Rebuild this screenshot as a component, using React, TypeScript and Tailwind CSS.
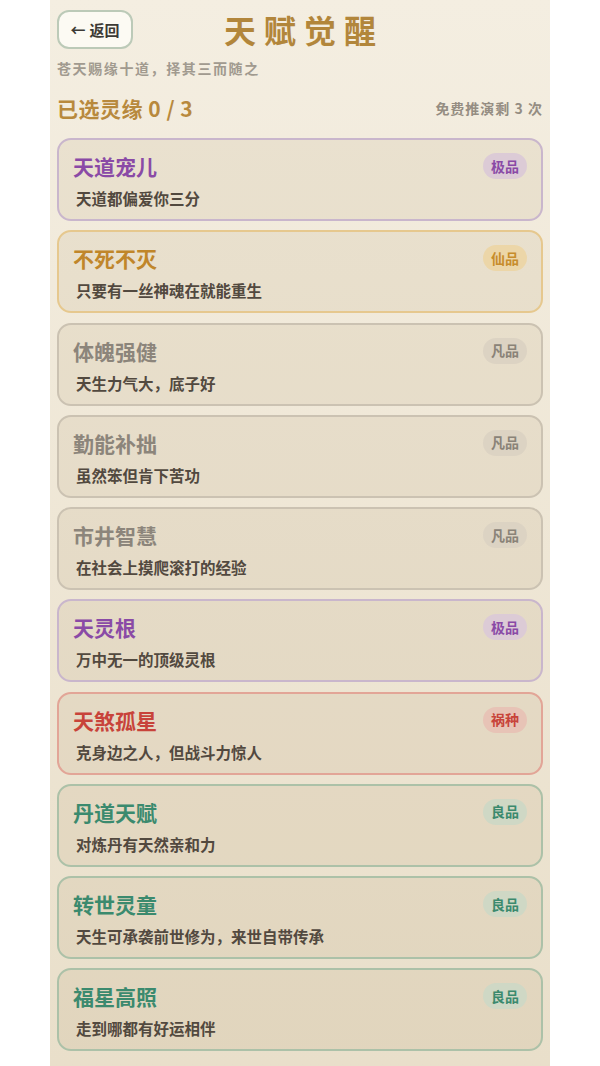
type Tier = 'ji' | 'xian' | 'fan' | 'huo' | 'liang';

type Talent = {
  name: string;
  desc: string;
  tier: Tier;
};

const tierStyle: Record<Tier, { label: string; card: string; title: string; badge: string }> = {
  ji: {
    label: '极品',
    card: 'border-[#c9b6cc]',
    title: 'text-[#8a4aa6]',
    badge: 'bg-[#dccbd6] text-[#8a4aa6]',
  },
  xian: {
    label: '仙品',
    card: 'border-[#e6c88e]',
    title: 'text-[#c0862a]',
    badge: 'bg-[#ecd6a8] text-[#c78d2c]',
  },
  fan: {
    label: '凡品',
    card: 'border-[#cbc2b2]',
    title: 'text-[#8c857b]',
    badge: 'bg-[#dcd3c3] text-[#8a8378]',
  },
  huo: {
    label: '祸种',
    card: 'border-[#e2a597]',
    title: 'text-[#c8433a]',
    badge: 'bg-[#e7c3b6] text-[#c8433a]',
  },
  liang: {
    label: '良品',
    card: 'border-[#acc1a8]',
    title: 'text-[#3b8a6e]',
    badge: 'bg-[#cfd8c5] text-[#3b8a6e]',
  },
};

const talents: Talent[] = [
  { name: '天道宠儿', desc: '天道都偏爱你三分', tier: 'ji' },
  { name: '不死不灭', desc: '只要有一丝神魂在就能重生', tier: 'xian' },
  { name: '体魄强健', desc: '天生力气大，底子好', tier: 'fan' },
  { name: '勤能补拙', desc: '虽然笨但肯下苦功', tier: 'fan' },
  { name: '市井智慧', desc: '在社会上摸爬滚打的经验', tier: 'fan' },
  { name: '天灵根', desc: '万中无一的顶级灵根', tier: 'ji' },
  { name: '天煞孤星', desc: '克身边之人，但战斗力惊人', tier: 'huo' },
  { name: '丹道天赋', desc: '对炼丹有天然亲和力', tier: 'liang' },
  { name: '转世灵童', desc: '天生可承袭前世修为，来世自带传承', tier: 'liang' },
  { name: '福星高照', desc: '走到哪都有好运相伴', tier: 'liang' },
];

function TalentCard({ talent }: { talent: Talent }) {
  const s = tierStyle[talent.tier];
  return (
    <button
      type="button"
      className={`flex h-[83px] w-full flex-col rounded-[14px] border-2 bg-[#a08050]/10 px-[14px] pt-[12px] text-left ${s.card}`}
    >
      <div className="flex h-[28px] w-full items-center justify-between">
        <span className={`text-[21px] font-bold leading-[28px] ${s.title}`}>{talent.name}</span>
        <span className={`flex h-[26px] w-[44px] items-center justify-center rounded-full text-[14px] font-bold ${s.badge}`}>
          {s.label}
        </span>
      </div>
      <p className="mt-[8px] pl-[3px] text-[15.5px] font-bold leading-[20px] text-[#52493f]">{talent.desc}</p>
    </button>
  );
}

export default function App() {
  return (
    <div className="flex min-h-screen justify-center bg-white" style={{ fontFamily: '"Noto Sans CJK SC", "Noto Sans", sans-serif' }}>
      <main className="min-h-screen w-[500px] bg-gradient-to-b from-[#f4eee1] to-[#e9dfca] px-[7px] pb-[14px] pt-[10px]">
        <header className="grid grid-cols-[1fr_auto_1fr] items-center">
          <button
            type="button"
            className="flex h-[39px] w-[76px] items-center justify-center gap-[4px] rounded-[12px] border-2 border-[#bccab8] bg-[#fcfaf3] text-[15px] font-bold leading-none text-[#3d3a35]"
          >
            <span>←</span>
            <span>返回</span>
          </button>
          <h1 className="pl-[8px] text-[32px] font-bold leading-[39px] tracking-[8px] text-[#b2863b]">天赋觉醒</h1>
          <div />
        </header>
        <p className="mt-[9px] text-[14px] font-bold leading-[20px] tracking-[1.6px] text-[#a19a8f]">苍天赐缘十道，择其三而随之</p>
        <div className="mt-[15px] flex h-[30px] items-center justify-between">
          <span className="text-[21px] font-bold leading-[30px] tracking-[0.5px] text-[#b8893d]">已选灵缘 0 / 3</span>
          <span className="text-[14px] font-bold tracking-[1px] text-[#958d82]">免费推演剩 3 次</span>
        </div>
        <div className="mt-[15px] flex flex-col gap-[9.25px]">
          {talents.map((t) => (
            <TalentCard key={t.name} talent={t} />
          ))}
        </div>
      </main>
    </div>
  );
}
